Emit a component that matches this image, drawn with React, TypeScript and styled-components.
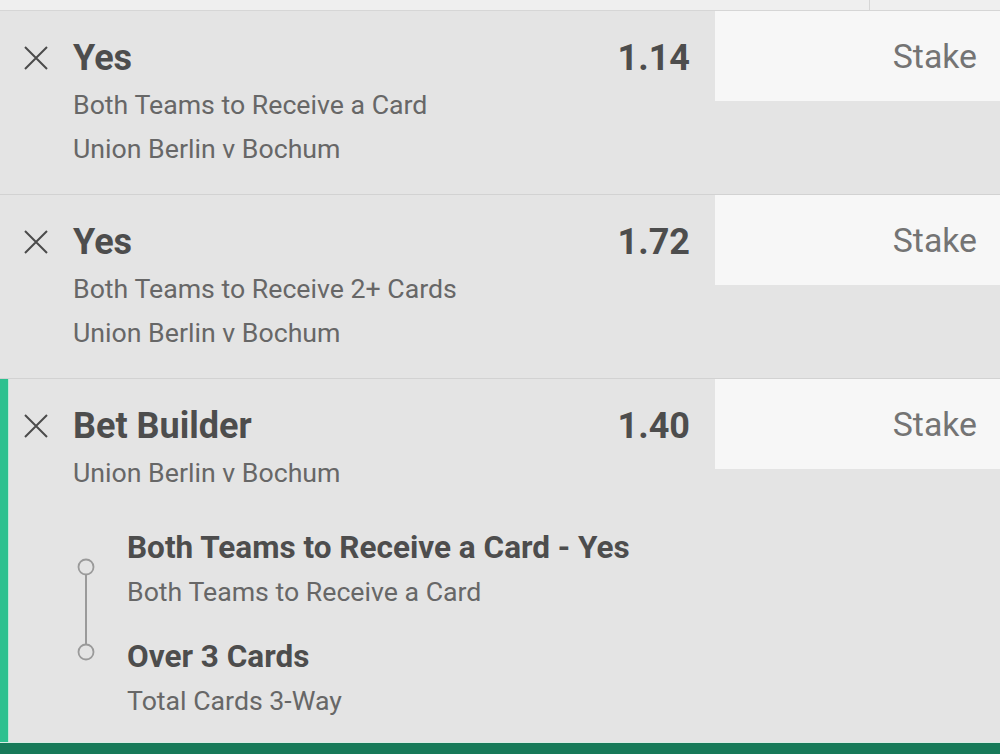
import React from "react";
import styled, { createGlobalStyle } from "styled-components";

const Global = createGlobalStyle`
  html, body { margin: 0; padding: 0; background: #e4e4e4; }
  body { font-family: Roboto, "Noto Sans", Arial, sans-serif; -webkit-font-smoothing: antialiased; }
  * { box-sizing: border-box; }
`;

const Page = styled.div`
  width: 1000px;
  height: 754px;
  overflow: hidden;
  display: flex;
  flex-direction: column;
  background: #e4e4e4;
`;

const TopStrip = styled.div`
  height: 11px;
  flex: none;
  display: flex;
  background: #efefef;
  border-bottom: 1px solid #d6d6d6;
`;

const TopCell = styled.div<{ $w?: number }>`
  flex: ${(p) => (p.$w ? "none" : "1")};
  width: ${(p) => (p.$w ? `${p.$w}px` : "auto")};
  border-left: ${(p) => (p.$w ? "1px solid #d6d6d6" : "none")};
`;

const Row = styled.div<{ $accent?: boolean; $last?: boolean }>`
  position: relative;
  display: flex;
  background: #e4e4e4;
  border-bottom: ${(p) => (p.$last ? "none" : "1px solid #d2d2d2")};
  padding-left: ${(p) => (p.$accent ? "0" : "9px")};
  flex: ${(p) => (p.$last ? "1" : "none")};
  min-height: 0;
`;

const Accent = styled.div`
  width: 9px;
  flex: none;
  background: #2cc18f;
  border-right: 1px solid #bfe9d9;
`;

const Main = styled.div<{ $last?: boolean }>`
  flex: 1;
  display: flex;
  flex-direction: column;
  padding: 22px 0 ${(p) => (p.$last ? "0" : "23px")} 0;
`;

const Head = styled.div`
  display: flex;
  align-items: flex-start;
`;

const Close = styled.div`
  width: 64px;
  flex: none;
  height: 50px;
  display: flex;
  align-items: center;
  padding-left: 14px;
  color: #4b4b4b;
`;

const Body = styled.div`
  flex: 1;
  display: flex;
  flex-direction: column;
`;

const TitleLine = styled.div`
  display: flex;
  justify-content: space-between;
  align-items: center;
  height: 50px;
`;

const Title = styled.div`
  font-size: 36px;
  font-weight: 700;
  color: #4d4d4d;
`;

const Odds = styled.div`
  font-size: 36px;
  font-weight: 700;
  color: #4d4d4d;
  padding-right: 25px;
`;

const Sub = styled.div`
  font-size: 26.7px;
  line-height: 44px;
  color: #676767;
  white-space: nowrap;
`;

const StakeBox = styled.div`
  width: 285px;
  height: 90px;
  flex: none;
  background: #f7f7f7;
  display: flex;
  align-items: center;
  justify-content: flex-end;
  padding-right: 23px;
  font-size: 33.8px;
  color: #747474;
`;

const Legs = styled.div`
  display: flex;
  margin-top: 31px;
  padding-left: 54px;
`;

const Timeline = styled.div`
  width: 64px;
  flex: none;
  padding-left: 14px;
  padding-top: 32px;
`;

const LegList = styled.div`
  display: flex;
  flex-direction: column;
  gap: 21px;
`;

const Leg = styled.div`
  display: flex;
  flex-direction: column;
`;

const LegTitle = styled.div`
  font-size: 31.5px;
  font-weight: 700;
  color: #4d4d4d;
  line-height: 44px;
  white-space: nowrap;
`;

const BottomBar = styled.div`
  height: 12px;
  flex: none;
  background: #177a59;
  border-top: 1px solid #d8ece4;
`;

const XIcon = () => (
  <svg width="26" height="26" viewBox="0 0 26 26">
    <path d="M2 2 L24 24 M24 2 L2 24" stroke="#4b4b4b" strokeWidth="2" fill="none" />
  </svg>
);

const TimelineSvg = () => (
  <svg width="18" height="104" viewBox="0 0 18 104">
    <circle cx="9" cy="9" r="7.5" stroke="#9a9a9a" strokeWidth="1.8" fill="none" />
    <line x1="9" y1="16.5" x2="9" y2="86.5" stroke="#9a9a9a" strokeWidth="2" />
    <circle cx="9" cy="94" r="7.5" stroke="#9a9a9a" strokeWidth="1.8" fill="none" />
  </svg>
);

type Sel = { title: string; odds: string; lines: string[] };

const singles: Sel[] = [
  { title: "Yes", odds: "1.14", lines: ["Both Teams to Receive a Card", "Union Berlin v Bochum"] },
  { title: "Yes", odds: "1.72", lines: ["Both Teams to Receive 2+ Cards", "Union Berlin v Bochum"] },
];

const legs = [
  { title: "Both Teams to Receive a Card - Yes", sub: "Both Teams to Receive a Card" },
  { title: "Over 3 Cards", sub: "Total Cards 3-Way" },
];

const Selection: React.FC<{ sel: Sel; accent?: boolean; last?: boolean; children?: React.ReactNode }> = ({
  sel,
  accent,
  last,
  children,
}) => (
  <Row $accent={accent} $last={last}>
    {accent && <Accent />}
    <Main $last={last}>
      <Head>
        <Close>
          <XIcon />
        </Close>
        <Body>
          <TitleLine>
            <Title>{sel.title}</Title>
            <Odds>{sel.odds}</Odds>
          </TitleLine>
          {sel.lines.map((l, i) => (
            <Sub key={i}>{l}</Sub>
          ))}
        </Body>
      </Head>
      {children}
    </Main>
    <StakeBox>Stake</StakeBox>
  </Row>
);

export default function App() {
  return (
    <Page>
      <Global />
      <TopStrip>
        <TopCell />
        <TopCell $w={131} />
      </TopStrip>
      {singles.map((s, i) => (
        <Selection key={i} sel={s} />
      ))}
      <Selection sel={{ title: "Bet Builder", odds: "1.40", lines: ["Union Berlin v Bochum"] }} accent last>
        <Legs>
          <Timeline>
            <TimelineSvg />
          </Timeline>
          <LegList>
            {legs.map((l, i) => (
              <Leg key={i}>
                <LegTitle>{l.title}</LegTitle>
                <Sub>{l.sub}</Sub>
              </Leg>
            ))}
          </LegList>
        </Legs>
      </Selection>
      <BottomBar />
    </Page>
  );
}
